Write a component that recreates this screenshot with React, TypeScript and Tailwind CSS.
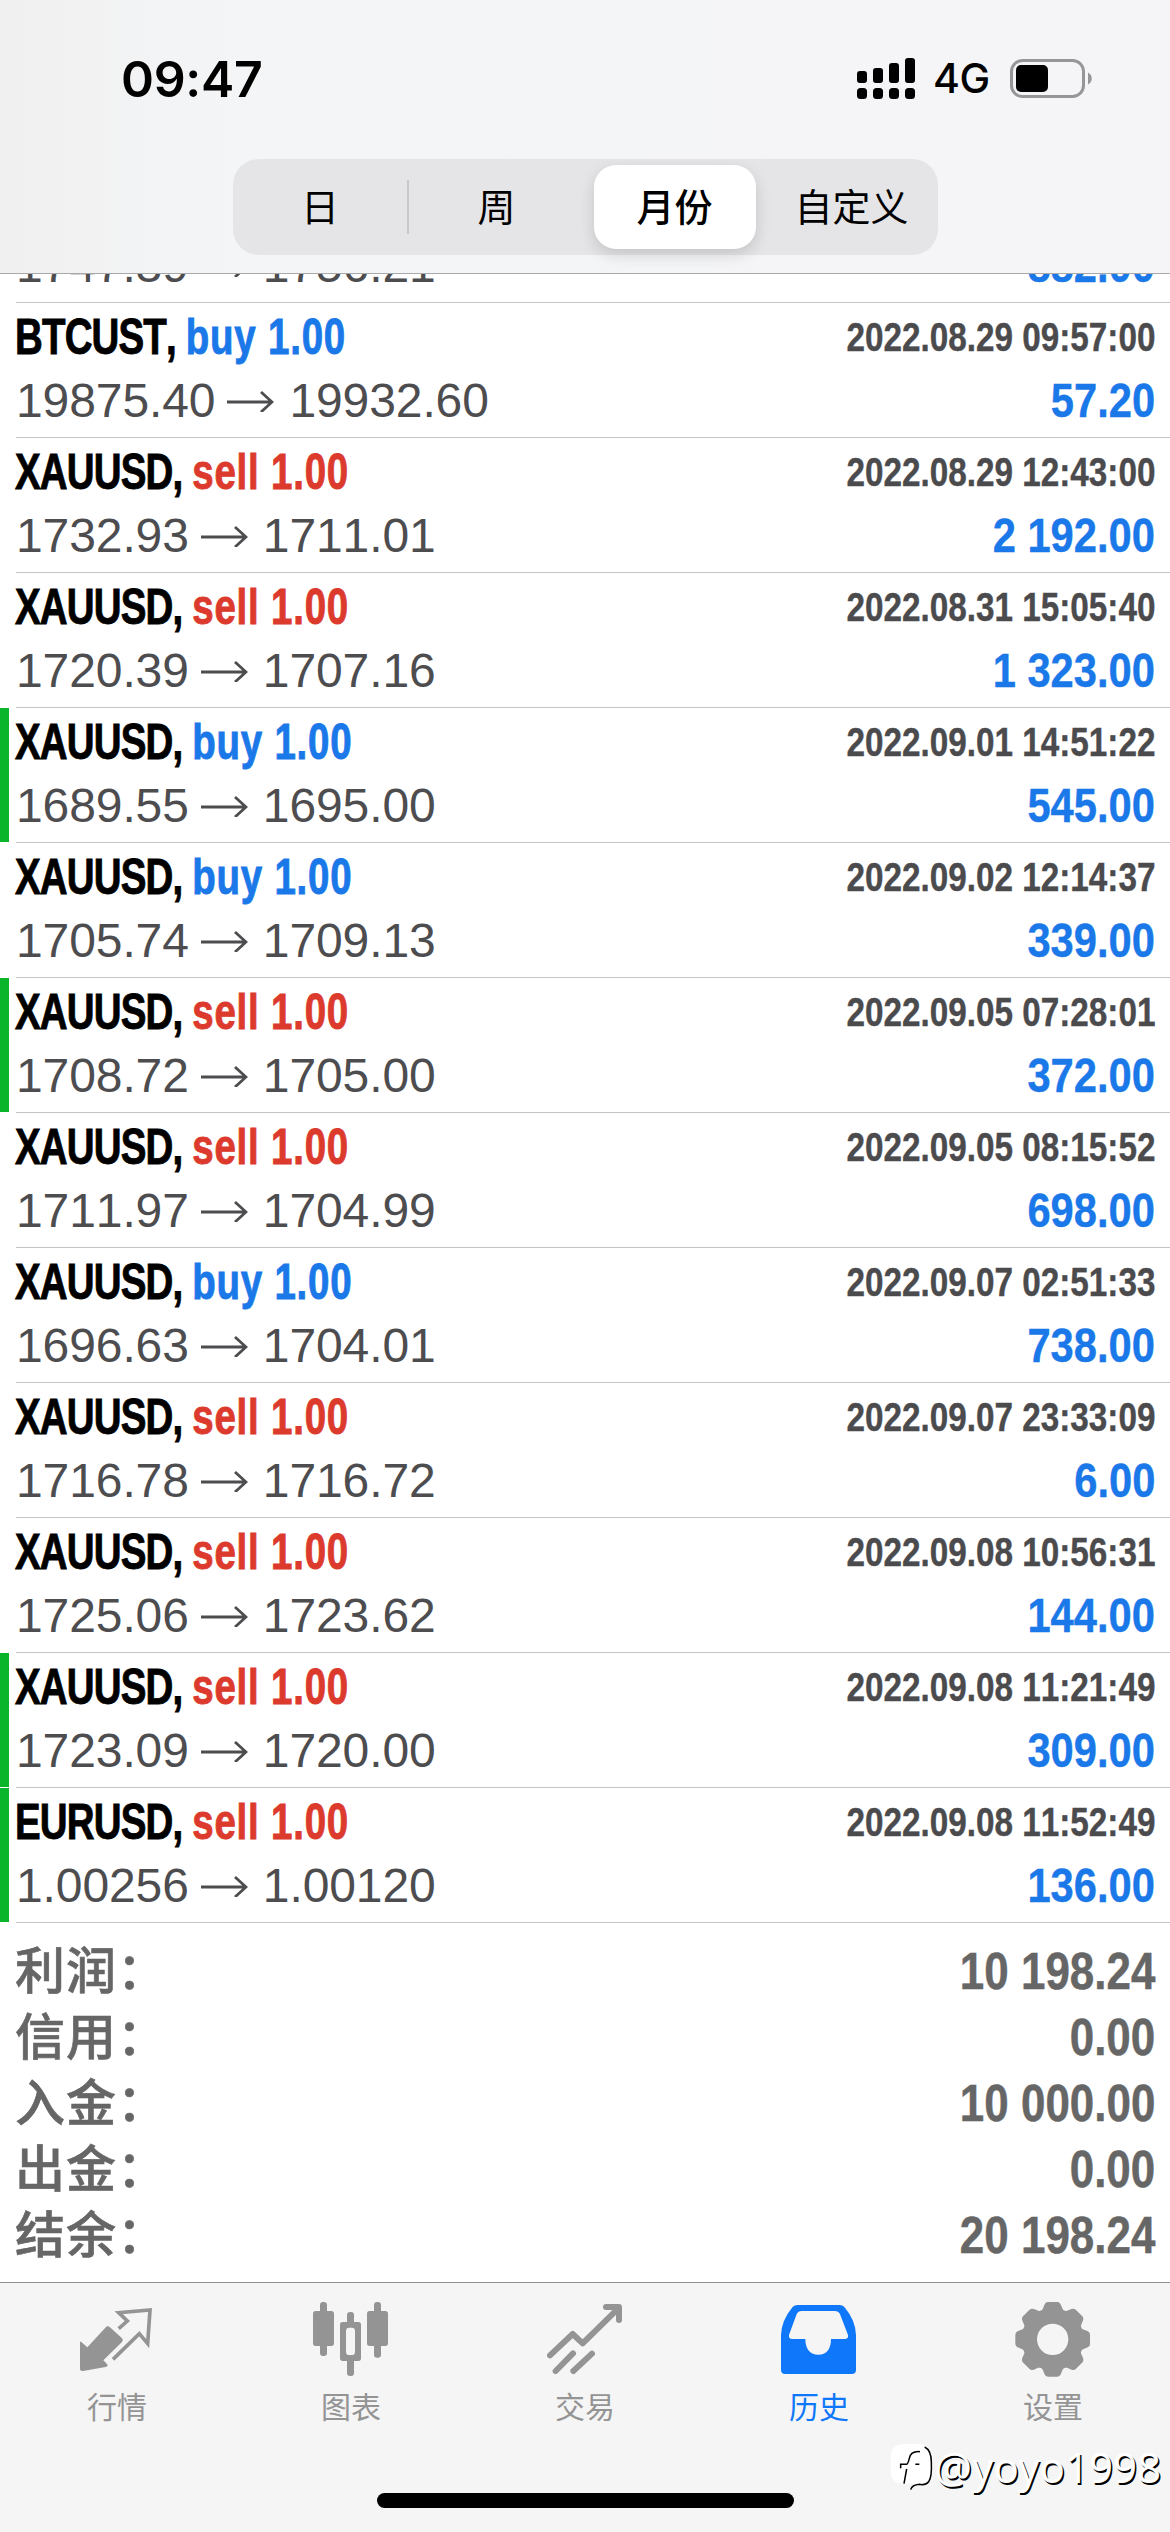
import type { ReactNode } from "react";
import clsx from "clsx";

type Deal = {
  symbol: string;
  side: "buy" | "sell";
  open: string;
  close: string;
  time: string;
  profit: string;
  marked?: boolean;
};

const deals: Deal[] = [
  { symbol: "XAUUSD", side: "buy", open: "1747.39", close: "1756.21", time: "2022.08.26 16:20:11", profit: "882.00" },
  { symbol: "BTCUST", side: "buy", open: "19875.40", close: "19932.60", time: "2022.08.29 09:57:00", profit: "57.20" },
  { symbol: "XAUUSD", side: "sell", open: "1732.93", close: "1711.01", time: "2022.08.29 12:43:00", profit: "2 192.00" },
  { symbol: "XAUUSD", side: "sell", open: "1720.39", close: "1707.16", time: "2022.08.31 15:05:40", profit: "1 323.00" },
  { symbol: "XAUUSD", side: "buy", open: "1689.55", close: "1695.00", time: "2022.09.01 14:51:22", profit: "545.00", marked: true },
  { symbol: "XAUUSD", side: "buy", open: "1705.74", close: "1709.13", time: "2022.09.02 12:14:37", profit: "339.00" },
  { symbol: "XAUUSD", side: "sell", open: "1708.72", close: "1705.00", time: "2022.09.05 07:28:01", profit: "372.00", marked: true },
  { symbol: "XAUUSD", side: "sell", open: "1711.97", close: "1704.99", time: "2022.09.05 08:15:52", profit: "698.00" },
  { symbol: "XAUUSD", side: "buy", open: "1696.63", close: "1704.01", time: "2022.09.07 02:51:33", profit: "738.00" },
  { symbol: "XAUUSD", side: "sell", open: "1716.78", close: "1716.72", time: "2022.09.07 23:33:09", profit: "6.00" },
  { symbol: "XAUUSD", side: "sell", open: "1725.06", close: "1723.62", time: "2022.09.08 10:56:31", profit: "144.00" },
  { symbol: "XAUUSD", side: "sell", open: "1723.09", close: "1720.00", time: "2022.09.08 11:21:49", profit: "309.00", marked: true },
  { symbol: "EURUSD", side: "sell", open: "1.00256", close: "1.00120", time: "2022.09.08 11:52:49", profit: "136.00", marked: true },
];

const totals = [
  { label: "利润：", value: "10 198.24" },
  { label: "信用：", value: "0.00" },
  { label: "入金：", value: "10 000.00" },
  { label: "出金：", value: "0.00" },
  { label: "结余：", value: "20 198.24" },
];

function StatusBar() {
  return (
    <div className="flex h-[159px] items-center justify-between pr-[78px] pb-[2px] pl-[121px] font-['Inter',sans-serif] text-black">
      <span className="text-[50px] leading-none font-semibold tracking-[-0.3px]">09:47</span>
      <div className="flex items-center">
        <svg className="h-[42px] w-[58px]" viewBox="0 0 58 42">
          <rect x="0" y="13" width="10" height="12" rx="3" />
          <rect x="16" y="10" width="10" height="15" rx="3" />
          <rect x="32" y="5" width="10" height="20" rx="3" />
          <rect x="48" y="0" width="10" height="25" rx="3" />
          <rect x="0" y="30" width="10" height="11" rx="3.5" />
          <rect x="16" y="30" width="10" height="11" rx="3.5" />
          <rect x="32" y="30" width="10" height="11" rx="3.5" />
          <rect x="48" y="30" width="10" height="11" rx="3.5" />
        </svg>
        <span className="ml-[18px] w-[77px] text-[41px] leading-none font-medium tracking-[-0.5px]">4G</span>
        <svg className="h-[39px] w-[82px]" viewBox="0 0 82 39">
          <rect x="1.5" y="1.5" width="72" height="36" rx="11" fill="none" stroke="#969698" strokeWidth="3" />
          <rect x="6" y="6" width="32" height="27" rx="5" />
          <path d="M78 13.5c5 2.500 5 9.500 0 12z" fill="#969698" />
        </svg>
      </div>
    </div>
  );
}

function PeriodTabs() {
  return (
    <div className="ml-[233px] flex h-24 w-[705px] items-center rounded-[26px] bg-[#e5e5e7] font-['Noto_Sans_CJK_SC',sans-serif] text-[38px] leading-[56px] text-black">
      <span className="w-[174px] pb-[5px] text-center">日</span>
      <span className="h-[54px] w-[2px] bg-[#c9c9cc]" />
      <span className="w-[175px] pb-[5px] text-center">周</span>
      <div className="flex w-[181px] justify-center">
        <span className="flex h-[84px] w-[162px] items-center justify-center rounded-[22px] bg-white pb-[5px] font-medium shadow-[0_6px_16px_rgba(0,0,0,0.14)]">
          月份
        </span>
      </div>
      <span className="w-[173px] pb-[5px] text-center">自定义</span>
    </div>
  );
}

function DealRow({ deal }: { deal: Deal }) {
  return (
    <li className="flex h-[135px] shrink-0">
      <span className={clsx("h-[134px] w-[9px]", deal.marked && "bg-[#0bb52b]")} />
      <div className="ml-[7px] flex-1 border-b border-[#c4c4c6] pr-[15px]">
        <div className="flex h-[68px] items-center justify-between font-bold [font-kerning:none]">
          <span className="-ml-px origin-left scale-x-[0.77] text-[50px] whitespace-nowrap text-black [-webkit-text-stroke:0.9px]">
            <span className="tracking-[-1.100px]">{deal.symbol}, </span>
            <span className={clsx("tracking-[1px]", deal.side === "buy" ? "text-[#1a78e8]" : "text-[#dc3a2d]")}>
              {deal.side} 1.00
            </span>
          </span>
          <span className="origin-right scale-x-[0.832] text-[40px] whitespace-nowrap text-[#4b4b4e] [-webkit-text-stroke:0.4px]">{deal.time}</span>
        </div>
        <div className="flex h-[59px] items-center justify-between">
          <span className="flex items-center text-[48px] tracking-[-0.1px] text-[#4d4d50] [font-kerning:none]">
            {deal.open}
            <svg className="mr-[15px] ml-[12px] h-[22px] w-[47px]" viewBox="0 0 47 22" fill="none" stroke="currentColor" strokeWidth="2.800">
              <path d="M0 12h45M34 2l11 10-11 10" />
            </svg>
            {deal.close}
          </span>
          <span className="origin-right scale-x-[0.868] text-[48px] font-bold whitespace-nowrap text-[#1a78e8] [-webkit-text-stroke:0.4px]">{deal.profit}</span>
        </div>
      </div>
    </li>
  );
}

function Totals() {
  return (
    <dl className="pt-[15px] pr-[15px] pb-[14px] pl-[15px] text-[#666]">
      {totals.map((row) => (
        <div key={row.label} className="flex h-[66px] justify-between">
          <dt className="font-['Noto_Sans_CJK_SC',sans-serif] text-[50px] leading-[59px] font-medium tracking-[1px] [-webkit-text-stroke:0.6px]">{row.label}</dt>
          <dd className="origin-right scale-x-[0.845] text-[52px] leading-[66px] font-bold whitespace-nowrap [-webkit-text-stroke:0.5px]">{row.value}</dd>
        </div>
      ))}
    </dl>
  );
}

function QuotesIcon() {
  return (
    <>
      <path d="M3 126Q3 118 8 124L25 139L79 80Q85 72 93 79L129 112Q134 117 129 123L73 178L84 189Q89 196 80 198L12 210Q3 211 3 204Z" />
      <path d="M119 83L145 60L119 35L213 27L206 128L181 98L102 175" fill="none" stroke="currentColor" strokeWidth="11" />
    </>
  );
}

function ChartIcon() {
  return (
    <>
      <rect x="21" y="3" width="21" height="162" rx="9" />
      <rect x="0" y="30" width="63" height="105" rx="8" />
      <rect x="102" y="33" width="21" height="192" rx="9" />
      <rect x="81" y="63" width="63" height="117" rx="8" />
      <rect x="99" y="80" width="27" height="82" rx="10" fill="#f5f5f5" />
      <rect x="183" y="3" width="21" height="167" rx="9" />
      <rect x="162" y="30" width="63" height="105" rx="8" />
    </>
  );
}

function TradeIcon() {
  return (
    <g fill="none" stroke="currentColor" strokeWidth="18" strokeLinecap="round" strokeLinejoin="round">
      <path d="M9 163L77 99L107 127L214 22" />
      <path d="M177 18H216V57" />
      <path d="M26 210L78 157" />
      <path d="M79 210L135 158" />
    </g>
  );
}

function HistoryIcon() {
  return (
    <path
      fillRule="evenodd"
      d="M0 102Q2 58 32 22Q39 12 50 12H175Q186 12 193 22Q223 58 225 102V206Q225 219 212 219H13Q0 219 0 206ZM62 30Q50 30 46 42L24 102Q22 114 34 114H73C73 145 88 161 112 161C136 161 150 145 150 114H191Q203 114 201 102L178 42Q174 30 161 30Z"
    />
  );
}

const toothAngles = [0, 45, 90, 135, 180, 225, 270, 315];

function SettingsIcon() {
  return (
    <g transform="translate(113 115)">
      <circle r="70" fill="none" stroke="currentColor" strokeWidth="46" />
      {toothAngles.map((angle) => (
        <path
          key={angle}
          transform={`rotate(${angle})`}
          d="M-38 -82Q-30 -87 -27 -98Q-23 -112 -14 -112H14Q23 -112 27 -98Q30 -87 38 -82Z"
        />
      ))}
    </g>
  );
}

const tabs: { label: string; icon: ReactNode; active?: boolean }[] = [
  { label: "行情", icon: <QuotesIcon /> },
  { label: "图表", icon: <ChartIcon /> },
  { label: "交易", icon: <TradeIcon /> },
  { label: "历史", icon: <HistoryIcon />, active: true },
  { label: "设置", icon: <SettingsIcon /> },
];

function TabBar() {
  return (
    <nav className="h-[250px] border-t border-[#8e8e90] bg-[#f5f5f5]">
      <div className="grid grid-cols-5 pt-[18px]">
        {tabs.map((tab) => (
          <div
            key={tab.label}
            className={clsx("flex flex-col items-center", tab.active ? "text-[#0f78fa]" : "text-[#949494]")}
          >
            <svg className="size-[76px]" viewBox="0 0 228 228" fill="currentColor">
              {tab.icon}
            </svg>
            <span className="mt-[10px] font-['Noto_Sans_CJK_SC',sans-serif] text-[30px] leading-[36px]">{tab.label}</span>
          </div>
        ))}
      </div>
      <div className="mx-auto mt-[70px] h-[15px] w-[417px] rounded-full bg-black" />
    </nav>
  );
}

function Watermark() {
  return (
    <div className="absolute right-[9px] bottom-[41px] flex items-center">
      <svg className="h-[48px] w-[44px]" viewBox="0 0 132 144" fill="none">
        <rect x="2" y="4" width="122" height="118" rx="34" fill="white" />
        <path d="M104 12Q124 22 124 58Q126 104 116 116Q106 128 88 124Q66 126 62 140" stroke="black" strokeWidth="4.500" />
        <path d="M90 26Q62 24 58 46Q54 62 50 64H32V76M50 78L42 122M76 64H88" stroke="black" strokeWidth="4.500" />
      </svg>
      <span className="font-['Noto_Sans',sans-serif] text-[42px] leading-[48px] text-white [text-shadow:1.500px_1.500px_0.500px_#000]">
        @yoyo1998
      </span>
    </div>
  );
}

export default function App() {
  return (
    <div className="relative flex h-[2532px] w-[1170px] flex-col overflow-hidden bg-white font-['Liberation_Sans',Arial,sans-serif]">
      <header className="h-[274px] border-b border-[#a9a9ab] bg-linear-to-r from-[#f0f0f1] via-[#f4f5f6] via-20% to-[#f5f5f8]">
        <StatusBar />
        <PeriodTabs />
      </header>
      <div className="h-[1649px] overflow-hidden">
        {/* list is scrolled so that the first deal is partly under the header */}
        <ul className="-mt-[106px]">
          {deals.map((deal) => (
            <DealRow key={deal.time} deal={deal} />
          ))}
        </ul>
      </div>
      <Totals />
      <TabBar />
      <Watermark />
    </div>
  );
}
